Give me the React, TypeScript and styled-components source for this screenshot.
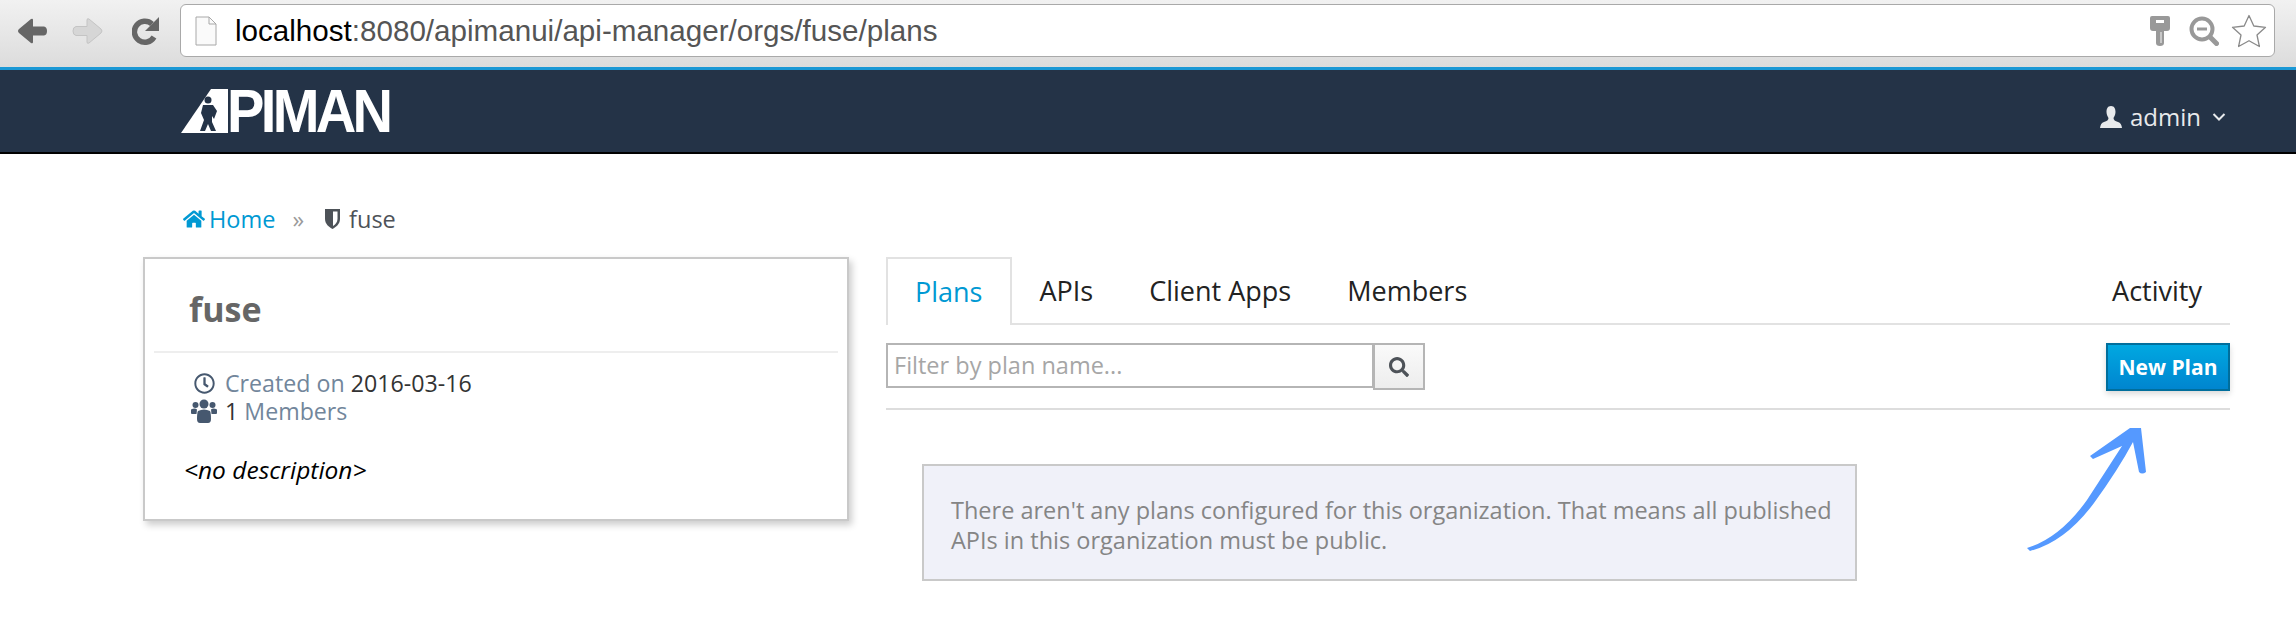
import styled, { createGlobalStyle } from 'styled-components';
import { FaHome, FaRegClock, FaSearch } from 'react-icons/fa';

const GlobalStyle = createGlobalStyle`
  html, body {
    margin: 0;
    padding: 0;
    background: #ffffff;
  }
  body {
    width: 2296px;
    height: 626px;
    overflow: hidden;
    font-family: "Open Sans", "Noto Sans", sans-serif;
  }
  * {
    box-sizing: border-box;
  }
`;

const Page = styled.div`
  position: relative;
  width: 2296px;
  height: 626px;
`;

const BrowserBar = styled.div`
  display: flex;
  align-items: center;
  height: 70px;
  padding: 0 21px 6px 16px;
  background: linear-gradient(#f1f1f1, #dcdcdc);
  border-bottom: 3px solid #1b98d5;
`;

const NavButtons = styled.div`
  display: flex;
  align-items: center;
  gap: 24px;
  width: 164px;

  svg:last-child {
    margin-left: 4px;
  }
`;

const AddressBar = styled.div`
  display: flex;
  flex: 1;
  align-items: center;
  height: 53px;
  padding: 0 7px 0 14px;
  background: #ffffff;
  border: 1.5px solid #a9a9a9;
  border-radius: 6px;
`;

const Url = styled.div`
  flex: 1;
  margin-left: 18px;
  font-family: "Liberation Sans", Arial, sans-serif;
  font-size: 29.6px;
  color: #555555;
`;

const UrlHost = styled.span`
  color: #000000;
`;

const AddressIcons = styled.div`
  display: flex;
  align-items: center;
  gap: 12px;

  svg:first-child {
    margin-right: 7px;
  }
`;

const NavBar = styled.div`
  display: flex;
  align-items: center;
  justify-content: space-between;
  height: 84px;
  padding: 0 70px 0 181px;
  background: #243347;
  border-bottom: 2px solid #000000;
`;

const Logo = styled.div`
  display: flex;
  align-items: center;
  height: 44px;
`;

const LogoText = styled.span`
  display: inline-block;
  margin-left: -1px;
  font-family: "Liberation Sans", Arial, sans-serif;
  font-size: 61px;
  font-weight: 700;
  line-height: 44px;
  letter-spacing: -4px;
  color: #ffffff;
  transform: scaleX(0.92);
  transform-origin: left center;
`;

const UserMenu = styled.div`
  display: flex;
  align-items: center;
  margin-top: 11px;
  font-size: 24px;
  color: #e8eaec;
`;

const UserName = styled.span`
  margin: 0 11px 0 8px;
`;

const Content = styled.div`
  padding: 50px 66px 0 143px;
`;

const Breadcrumb = styled.div`
  display: flex;
  align-items: center;
  height: 30px;
  margin: 0 0 23px 40px;
  font-size: 23.5px;
  color: #4d5258;
`;

const Crumb = styled.span<{ $active?: boolean }>`
  display: flex;
  align-items: center;
  gap: ${(p) => (p.$active ? '4px' : '9px')};
  color: ${(p) => (p.$active ? '#0099d3' : '#4d5258')};
`;

const Separator = styled.span`
  margin: 0 21px 0 17px;
  color: #9a9a9a;
`;

const Columns = styled.div`
  display: grid;
  grid-template-columns: 706px 1fr;
  column-gap: 37px;
`;

const Card = styled.div`
  height: 264px;
  padding: 0 9px;
  background: #ffffff;
  border: 2px solid #c9c9c9;
  box-shadow: 3px 4px 7px rgba(0, 0, 0, 0.2);
`;

const CardTitle = styled.h1`
  height: 94px;
  margin: 0;
  padding: 26px 0 0 35px;
  font-size: 34px;
  font-weight: 700;
  line-height: 48px;
  color: #666666;
  border-bottom: 2px solid #eeeeee;
`;

const MetaList = styled.div`
  display: flex;
  flex-direction: column;
  margin-top: 16px;
  padding-left: 37px;
  font-size: 23.2px;
  line-height: 28px;
  color: #333333;
`;

const MetaRow = styled.div`
  display: flex;
  align-items: center;
`;

const MetaIcon = styled.span`
  display: flex;
  justify-content: center;
  width: 26px;
  margin-right: 8px;
  color: #46586f;
`;

const MetaLabel = styled.span`
  color: #72869b;
`;

const Description = styled.p`
  margin: 29px 0 0 30px;
  font-size: 24.5px;
  font-style: italic;
  line-height: 32px;
  color: #000000;
`;

const Tabs = styled.div`
  display: flex;
  height: 68px;
  border-bottom: 2px solid #e2e2e2;
`;

const Tab = styled.div<{ $active?: boolean }>`
  display: flex;
  align-items: center;
  height: 68px;
  padding: 0 ${(p) => (p.$active ? '27px' : '28px')} 2px;
  font-size: 27px;
  color: ${(p) => (p.$active ? '#0099d3' : '#222222')};
  background: ${(p) => (p.$active ? '#ffffff' : 'transparent')};
  border: ${(p) => (p.$active ? '2px solid #e2e2e2' : '0')};
  border-bottom: 0;
`;

const TabSpacer = styled.div`
  flex: 1;
`;

const Toolbar = styled.div`
  display: flex;
  align-items: flex-start;
  height: 85px;
  padding-top: 18px;
  border-bottom: 2px solid #dddddd;
`;

const FilterInput = styled.input`
  width: 488px;
  height: 45px;
  padding: 0 6px 2px;
  font-family: inherit;
  font-size: 23.5px;
  color: #333333;
  background: #ffffff;
  border: 2px solid #b5b5b5;
  border-radius: 0;
  outline: none;

  &::placeholder {
    color: #a6a6a6;
    opacity: 1;
  }
`;

const SearchButton = styled.button`
  display: flex;
  align-items: center;
  justify-content: center;
  width: 52px;
  height: 47px;
  margin-left: -1px;
  padding: 0;
  color: #4d5258;
  background: linear-gradient(#fafafa, #ededed);
  border: 2px solid #b5b5b5;
`;

const PrimaryButton = styled.button`
  width: 124px;
  height: 48px;
  margin-left: auto;
  padding: 0;
  font-family: inherit;
  font-size: 21px;
  font-weight: 700;
  color: #ffffff;
  background: linear-gradient(#00a8e1, #0085cf);
  border: 2px solid #006e9c;
  box-shadow: 0 3px 6px rgba(0, 0, 0, 0.15);
`;

const Notice = styled.div`
  width: 935px;
  height: 117px;
  margin: 54px 0 0 36px;
  padding: 29px 18px 0 27px;
  font-size: 23.5px;
  line-height: 30px;
  color: #858585;
  background: #f0f1f9;
  border: 2px solid #c9c9c9;
`;

const ArrowOverlay = styled.svg`
  position: absolute;
  left: 2010px;
  top: 420px;
`;

const BackIcon = () => (
  <svg width="32" height="28" viewBox="0 0 32 28">
    <path
      d="M15 2 L3 12 Q1 14 3 16 L15 26 Q17 27 17 25 L17 18.5 L28 18.5 Q31 18 31 14 Q31 10 28 9.5 L17 9.5 L17 3 Q17 1 15 2 Z"
      fill="#666666"
    />
  </svg>
);

const ForwardIcon = () => (
  <svg width="32" height="28" viewBox="0 0 32 28">
    <path
      d="M17 2 L29 12 Q31 14 29 16 L17 26 Q15 27 15 25 L15 18.5 L4 18.5 Q1 18 1 14 Q1 10 4 9.5 L15 9.5 L15 3 Q15 1 17 2 Z"
      fill="#d6d6d6"
      stroke="#c4c4c4"
    />
  </svg>
);

const ReloadIcon = () => (
  <svg width="28" height="30" viewBox="0 0 28 30">
    <path d="M22 21 A10.5 10.5 0 1 1 20 8" fill="none" stroke="#666666" strokeWidth="5.5" />
    <path d="M27 1 L27 15 L13 15 Z" fill="#666666" />
  </svg>
);

const PageIcon = () => (
  <svg width="22" height="30" viewBox="0 0 22 30">
    <path d="M1 1 H14 L21 8 V29 H1 Z" fill="#fafafa" stroke="#a8a8a8" />
    <path d="M14 1 V8 H21" fill="none" stroke="#a8a8a8" />
  </svg>
);

const KeyIcon = () => (
  <svg width="20" height="30" viewBox="0 0 20 30">
    <path d="M2 0 H18 Q20 0 20 2 V12 Q20 15 17 15 H14 V27 Q14 30 10 30 Q6 30 6 27 V15 H3 Q0 15 0 12 V2 Q0 0 2 0 Z" fill="#999999" />
    <rect x="6" y="4" width="8" height="3" fill="#ffffff" />
    <rect x="10" y="16" width="2" height="11" fill="#c8c8c8" />
  </svg>
);

const ZoomOutIcon = () => (
  <svg width="30" height="30" viewBox="0 0 30 30">
    <circle cx="13" cy="13" r="10.5" fill="none" stroke="#999999" strokeWidth="4" />
    <path d="M8 13 H18" stroke="#999999" strokeWidth="3" />
    <path d="M21.5 21.5 L27.5 27.5" stroke="#999999" strokeWidth="5" strokeLinecap="round" />
  </svg>
);

const StarIcon = () => (
  <svg width="36" height="34" viewBox="0 0 36 34">
    <path
      d="M18 1.5 L22.8 12 L34.5 13.3 L26 21 L28.4 32.5 L18 26.7 L7.6 32.5 L10 21 L1.5 13.3 L13.2 12 Z"
      fill="#ffffff"
      stroke="#8a8a8a"
      strokeWidth="1.3"
      strokeLinejoin="round"
    />
  </svg>
);

const LogoMark = () => (
  <svg width="47" height="44" viewBox="0 0 47 44">
    <path d="M30 0 H47 V44 H0 Z" fill="#ffffff" />
    <circle cx="27" cy="11" r="3.5" fill="#243347" />
    <path d="M22 16 H32 L36 22 L33 30 L31 27 L31 33 L35 42 H30 L27 35 L24 42 H19 L23 31 L20 24 Z" fill="#243347" />
  </svg>
);

const UserIcon = () => (
  <svg width="22" height="22" viewBox="0 0 22 22">
    <path
      d="M11 0 C7.5 0 6.5 3 6.5 6 C6.5 9 8 11 8.5 12 C8.5 14 7 15 4 16 C1.5 17 0.5 18.5 0 22 H22 C21.5 18.5 20.5 17 18 16 C15 15 13.5 14 13.5 12 C14 11 15.5 9 15.5 6 C15.5 3 14.5 0 11 0 Z"
      fill="#e8eaec"
    />
  </svg>
);

const ChevronIcon = () => (
  <svg width="14" height="10" viewBox="0 0 14 10">
    <path d="M1.5 2 L7 7.5 L12.5 2" fill="none" stroke="#e8eaec" strokeWidth="2" />
  </svg>
);

const ShieldIcon = () => (
  <svg width="15" height="20" viewBox="0 0 15 20">
    <path d="M0 0 H15 V10 C15 15 11 18 7.5 20 C4 18 0 15 0 10 Z" fill="#4d5258" />
    <path d="M8 2.5 H12.5 V10 C12.5 13 10.5 15.5 8 17 Z" fill="#ffffff" />
  </svg>
);

const UsersIcon = () => (
  <svg width="26" height="24" viewBox="0 0 26 24">
    <circle cx="4.5" cy="6" r="3" fill="#46586f" />
    <circle cx="21.5" cy="6" r="3" fill="#46586f" />
    <circle cx="13" cy="5" r="4.5" fill="#46586f" />
    <path d="M0 10.5 Q4 8.5 6 10.5 L5.5 15 H1 Q0 15 0 14 Z" fill="#46586f" />
    <path d="M26 10.5 Q22 8.5 20 10.5 L20.5 15 H25 Q26 15 26 14 Z" fill="#46586f" />
    <path d="M7 12 Q13 9 19 12 Q20 14 20 20 Q20 24 17 24 H9 Q6 24 6 20 Q6 14 7 12 Z" fill="#46586f" />
  </svg>
);

const App = () => {
  return (
    <>
      <GlobalStyle />
      <Page>
        <BrowserBar>
          <NavButtons>
            <BackIcon />
            <ForwardIcon />
            <ReloadIcon />
          </NavButtons>
          <AddressBar>
            <PageIcon />
            <Url>
              <UrlHost>localhost</UrlHost>:8080/apimanui/api-manager/orgs/fuse/plans
            </Url>
            <AddressIcons>
              <KeyIcon />
              <ZoomOutIcon />
              <StarIcon />
            </AddressIcons>
          </AddressBar>
        </BrowserBar>
        <NavBar>
          <Logo>
            <LogoMark />
            <LogoText>PIMAN</LogoText>
          </Logo>
          <UserMenu>
            <UserIcon />
            <UserName>admin</UserName>
            <ChevronIcon />
          </UserMenu>
        </NavBar>
        <Content>
          <Breadcrumb>
            <Crumb $active>
              <FaHome size={22} />
              Home
            </Crumb>
            <Separator>»</Separator>
            <Crumb>
              <ShieldIcon />
              fuse
            </Crumb>
          </Breadcrumb>
          <Columns>
            <Card>
              <CardTitle>fuse</CardTitle>
              <MetaList>
                <MetaRow>
                  <MetaIcon>
                    <FaRegClock size={21} />
                  </MetaIcon>
                  <MetaLabel>Created on</MetaLabel>&nbsp;2016-03-16
                </MetaRow>
                <MetaRow>
                  <MetaIcon>
                    <UsersIcon />
                  </MetaIcon>
                  1&nbsp;<MetaLabel>Members</MetaLabel>
                </MetaRow>
              </MetaList>
              <Description>&lt;no description&gt;</Description>
            </Card>
            <div>
              <Tabs>
                <Tab $active>Plans</Tab>
                <Tab>APIs</Tab>
                <Tab>Client Apps</Tab>
                <Tab>Members</Tab>
                <TabSpacer />
                <Tab>Activity</Tab>
              </Tabs>
              <Toolbar>
                <FilterInput placeholder="Filter by plan name..." />
                <SearchButton>
                  <FaSearch size={20} />
                </SearchButton>
                <PrimaryButton>New Plan</PrimaryButton>
              </Toolbar>
              <Notice>
                There aren't any plans configured for this organization. That means all published APIs in this
                organization must be public.
              </Notice>
            </div>
          </Columns>
        </Content>
        <ArrowOverlay width="150" height="140" viewBox="0 0 150 140">
          <path
            d="M17 128 Q50 118 77 80 Q90 60 112 26 L83 39 L80 36 L120 8 L131 8 L136 52 Q132 55 129 52 L123 22 Q108 50 84 83 Q55 122 20 131 Z"
            fill="#5599ff"
          />
        </ArrowOverlay>
      </Page>
    </>
  );
};

export default App;
